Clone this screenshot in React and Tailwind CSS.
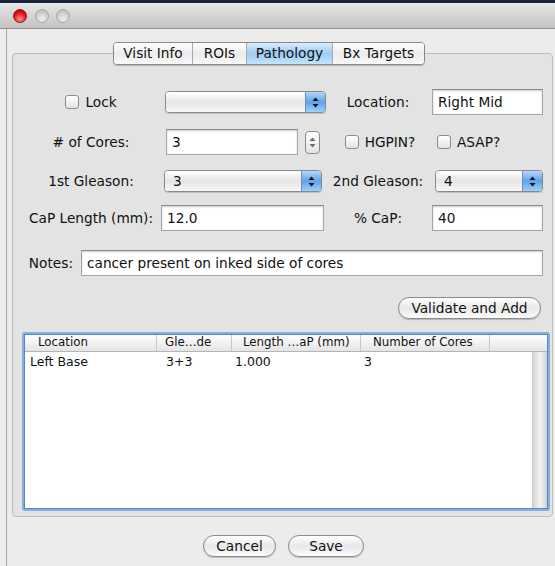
import React from 'react';

const Arrows = ({ color = '#111' }) => (
  <svg width="7" height="11" viewBox="0 0 7 11">
    <path d="M3.5 0.5 L6.5 4 L0.5 4 Z" fill={color} />
    <path d="M3.5 10.5 L6.5 7 L0.5 7 Z" fill={color} />
  </svg>
);

const Checkbox = ({ label }) => (
  <div className="flex items-center gap-[6px]">
    <div className="w-[14px] h-[14px] rounded-[3px] border border-[#8e8e8e] bg-linear-to-b from-white to-[#e3e3e3] shadow-[inset_0_1px_0_#fff]"></div>
    <span>{label}</span>
  </div>
);

const TextField = ({ value, className = '' }) => (
  <div className={`h-[26px] shrink-0 bg-white border border-[#a5a5a5] border-t-[#8a8a8a] shadow-[inset_0_1px_2px_rgba(0,0,0,0.2)] flex items-center pl-[5px] whitespace-nowrap ${className}`}>
    {value}
  </div>
);

const Popup = ({ value, className = '' }) => (
  <div className={`h-[22px] flex rounded-[4px] border border-[#8a8a8a] overflow-hidden shadow-[0_1px_1px_rgba(0,0,0,0.15)] ${className}`}>
    <div className="flex-1 bg-linear-to-b from-white via-[#e6e6e6] to-[#f8f8f8] flex items-center pl-[8px]">{value}</div>
    <div className="w-[20px] bg-linear-to-b from-[#b6d6f6] via-[#5fa2ea] to-[#9cd0fa] border-l border-[#6b8fbf] flex items-center justify-center">
      <Arrows />
    </div>
  </div>
);

const AquaButton = ({ label, className = '' }) => (
  <div className={`h-[22px] rounded-full border border-[#8a8a8a] bg-linear-to-b from-white via-[#e8e8e8] to-[#fbfbfb] shadow-[0_1px_1px_rgba(0,0,0,0.2)] flex items-center justify-center whitespace-nowrap ${className}`}>
    {label}
  </div>
);

const tabs = ['Visit Info', 'ROIs', 'Pathology', 'Bx Targets'];
const tabWidths = ['w-[78px]', 'w-[54px]', 'w-[86px]', 'w-[92px]'];

const columns = [
  { title: 'Location', w: 'w-[132px]', hp: 'pl-[13px]', cp: 'pl-[5px]' },
  { title: 'Gle…de', w: 'w-[75px]', hp: 'pl-[8px]', cp: 'pl-[9px]' },
  { title: 'Length …aP (mm)', w: 'w-[129px]', hp: 'pl-[11px]', cp: 'pl-[3px]' },
  { title: 'Number of Cores', w: 'w-[129px]', hp: 'pl-[12px]', cp: 'pl-[3px]' },
];

const rows = [['Left Base', '3+3', '1.000', '3']];

export default function App() {
  return (
    <div className="w-[555px] h-[566px] overflow-hidden bg-[#ececec] text-[13.7px] text-[#111] font-['DejaVu_Sans',sans-serif]">
      {/* Title bar */}
      <div className="h-[3px] bg-[#1b2540]"></div>
      <div className="h-[26px] bg-linear-to-b from-[#e8e8e8] to-[#c3c3c3] border-b border-[#8e8e8e] flex items-center pl-[13px] gap-[8px]">
        <div className="w-[14px] h-[14px] rounded-full border border-[#9a1010] bg-[radial-gradient(circle_at_50%_75%,#ff9a9a,#e8141e_55%,#a0000a)]"></div>
        <div className="w-[14px] h-[14px] rounded-full border border-[#a8a8a8] bg-[radial-gradient(circle_at_50%_75%,#f0f0f0,#cfcfcf_55%,#b4b4b4)]"></div>
        <div className="w-[14px] h-[14px] rounded-full border border-[#a8a8a8] bg-[radial-gradient(circle_at_50%_75%,#f0f0f0,#cfcfcf_55%,#b4b4b4)] -ml-[1px]"></div>
      </div>

      <div className="flex">
        <div className="w-[6px]"></div>
        <div className="w-px h-[540px] bg-[#a4a4a4]"></div>
        <div className="flex-1 pl-[5px] pr-[2px]">
          {/* Tabs */}
          <div className="relative z-10 mt-[13px] flex pl-[101px]">
            <div className="flex h-[23px] rounded-[4px] border border-[#8a8a8a] overflow-hidden shadow-[0_1px_1px_rgba(0,0,0,0.2)]">
              {tabs.map((t, i) => (
                <div
                  key={t}
                  className={`${tabWidths[i]} flex items-center justify-center ${i > 0 ? 'border-l border-[#a9a9a9]' : ''} ${
                    t === 'Pathology'
                      ? 'bg-linear-to-b from-[#d8ecfc] via-[#9ccbf4] to-[#c4e4fc]'
                      : 'bg-linear-to-b from-white via-[#ececec] to-[#f8f8f8]'
                  }`}
                >
                  {t}
                </div>
              ))}
            </div>
          </div>

          {/* Tab panel */}
          <div className="-mt-[12px] h-[464px] rounded-[4px] border border-[#bdbdbd] bg-[#e3e3e3] pt-[35px]">
            {/* Lock row */}
            <div className="flex items-center h-[26px] pl-[13px]">
              <div className="w-[130px] flex justify-center"><Checkbox label="Lock" /></div>
              <Popup className="ml-[9px] w-[161px]" />
              <div className="ml-[4px] w-[96px] text-center">Location:</div>
              <TextField className="ml-[6px] w-[111px]" value="Right Mid" />
            </div>

            {/* Cores row */}
            <div className="flex items-center h-[26px] pl-[13px] mt-[14px]">
              <div className="w-[130px] text-center">#&nbsp;of Cores:</div>
              <TextField className="ml-[10px] w-[132px]" value="3" />
              <div className="ml-[7px] w-[15px] h-[23px] rounded-[4px] border border-[#8a8a8a] bg-linear-to-b from-white to-[#e4e4e4] flex items-center justify-center">
                <Arrows color="#6a6a6a" />
              </div>
              <div className="ml-[10px] w-[96px] flex justify-center pl-[4px]"><Checkbox label="HGPIN?" /></div>
              <div className="ml-[11px]"><Checkbox label="ASAP?" /></div>
            </div>

            {/* Gleason row */}
            <div className="flex items-center h-[26px] pl-[13px] mt-[13px]">
              <div className="w-[130px] text-center">1st Gleason:</div>
              <Popup className="ml-[8px] w-[158px]" value="3" />
              <div className="ml-[8px] w-[96px] text-center whitespace-nowrap">2nd Gleason:</div>
              <Popup className="ml-[9px] w-[108px]" value="4" />
            </div>

            {/* CaP row */}
            <div className="flex items-center h-[26px] pl-[13px] mt-[11px]">
              <div className="w-[130px] text-center whitespace-nowrap">CaP Length (mm):</div>
              <TextField className="ml-[5px] w-[163px]" value="12.0" />
              <div className="ml-[6px] w-[96px] text-center">% CaP:</div>
              <TextField className="ml-[6px] w-[111px]" value="40" />
            </div>

            {/* Notes */}
            <div className="flex items-center h-[26px] pl-[13px] mt-[19px]">
              <div className="w-[47px] text-right whitespace-nowrap">Notes:</div>
              <TextField className="ml-[8px] w-[462px]" value="cancer present on inked side of cores" />
            </div>

            <div className="flex justify-end pr-[11px] mt-[21px]">
              <AquaButton className="w-[143px]" label="Validate and Add" />
            </div>

            {/* Results table */}
            <div className="ml-[9px] mt-[13px] w-[528px] h-[179px] p-[2px] rounded-[3px] bg-[#7fb1e8]">
              <div className="h-full bg-white border border-[#5d86b8] flex flex-col">
                <div className="flex h-[17px] shrink-0 text-[11.8px] bg-linear-to-b from-white to-[#e4e4e4] border-b border-[#b5b5b5]">
                  {columns.map((c) => (
                    <div key={c.title} className={`${c.w} ${c.hp} flex items-center border-r border-[#c8c8c8] whitespace-nowrap`}>
                      {c.title}
                    </div>
                  ))}
                  <div className="flex-1"></div>
                </div>
                <div className="flex flex-1">
                  <div className="flex-1 text-[12.5px]">
                    {rows.map((r, i) => (
                      <div key={i} className="flex h-[20px] items-center">
                        {r.map((cell, j) => (
                          <div key={j} className={`${columns[j].w} ${columns[j].cp}`}>{cell}</div>
                        ))}
                      </div>
                    ))}
                  </div>
                  <div className="w-[15px] bg-linear-to-r from-[#d6d6d6] via-[#f4f4f4] to-[#d2d2d2] border-l border-[#c8c8c8]"></div>
                </div>
              </div>
            </div>
          </div>

          {/* Dialog buttons */}
          <div className="flex mt-[18px] pl-[191px] gap-[12px]">
            <AquaButton className="w-[73px]" label="Cancel" />
            <AquaButton className="w-[76px]" label="Save" />
          </div>
        </div>
      </div>
    </div>
  );
}
